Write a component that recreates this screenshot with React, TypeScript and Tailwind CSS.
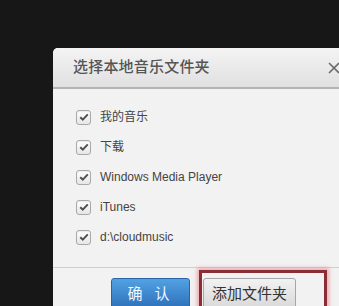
import React from "react";

const items = ["我的音乐", "下载", "Windows Media Player", "iTunes", "d:\\cloudmusic"];

const CheckBox = () => (
  <div className="w-[15px] h-[15px] rounded-[3px] border border-[#a9a9a9] bg-gradient-to-b from-[#ffffff] to-[#e6e6e6] flex items-center justify-center shadow-[inset_0_1px_1px_rgba(0,0,0,0.08)]">
    <svg width="10" height="8" viewBox="0 0 10 8">
      <path d="M1.2 4.2 L3.8 6.6 L8.8 1.4" fill="none" stroke="#505050" strokeWidth="2" />
    </svg>
  </div>
);

export default function App() {
  return (
    <div
      className="relative w-[339px] h-[306px] overflow-hidden bg-[#171717]"
      style={{ fontFamily: '"Liberation Sans", "Noto Sans CJK SC", sans-serif' }}
    >
      <div className="ml-[53px] mt-[48px] w-[310px] h-[280px] bg-[#f2f2f2] rounded-tl-[5px] overflow-hidden">
        {/* header */}
        <div className="h-[41px] flex items-center justify-between pl-[20px] pr-[23px] bg-gradient-to-b from-[#f4f4f4] to-[#e0e0e0] border-b-2 border-[#b4b4b4]">
          <span className="text-[15px] font-medium text-[#555] tracking-[0.2px]">选择本地音乐文件夹</span>
          <svg width="12" height="12" viewBox="0 0 12 12" className="mt-[1px]">
            <path d="M1 1 L11 11 M11 1 L1 11" stroke="#6a6a6a" strokeWidth="1.6" />
          </svg>
        </div>

        {/* list */}
        <div className="pt-[13px] pl-[23px] h-[178px]">
          {items.map((t) => (
            <div key={t} className="h-[30px] flex items-center gap-[9px]">
              <CheckBox />
              <span className="text-[12px] text-[#444]">{t}</span>
            </div>
          ))}
        </div>

        {/* footer */}
        <div className="border-t border-[#cfcfcf] bg-[#f2f2f2] pt-[10px] pl-[58px] flex gap-[13px]">
          <button className="w-[79px] h-[32px] rounded-[3px] border border-[#2a64a6] bg-gradient-to-b from-[#52a2e2] to-[#2c6fb9] text-[#f4f8ff] text-[15px] tracking-[4px]">
            确 认
          </button>
          <button className="w-[93px] h-[32px] rounded-[3px] border border-[#a6a6a6] bg-gradient-to-b from-[#f2f2f2] to-[#d8d8d8] text-[#333] text-[15px]">
            添加文件夹
          </button>
        </div>
      </div>

      {/* highlight box */}
      <div className="absolute left-[199px] top-[270px] w-[128px] h-[50px] border-[3px] border-[#8a2d35] shadow-[0_0_4px_2px_rgba(230,120,130,0.6)]" />
    </div>
  );
}
